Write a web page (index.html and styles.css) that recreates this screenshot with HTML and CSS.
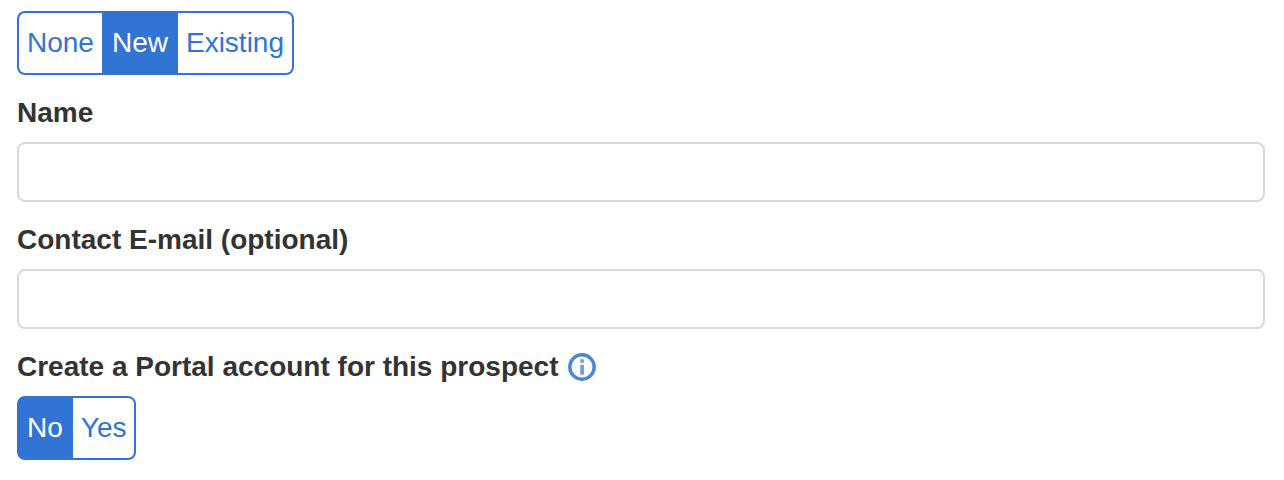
FILE: index.html
```html
<!DOCTYPE html>
<html lang="en">

<head>
  <meta charset="UTF-8" />
  <meta name="viewport" content="width=device-width, initial-scale=1.0" />
  <title>Prospect</title>
  <link rel="stylesheet" href="styles.css">
</head>

<body>
  <form class="prospect-form">
    <div class="btn-group">
      <button type="button" class="btn">None</button>
      <button type="button" class="btn active">New</button>
      <button type="button" class="btn">Existing</button>
    </div>

    <div class="field">
      <label for="name">Name</label>
      <input type="text" id="name" />
    </div>

    <div class="field">
      <label for="email">Contact E-mail (optional)</label>
      <input type="text" id="email" />
    </div>

    <div class="field">
      <div class="label-row">
        <span class="label">Create a Portal account for this prospect</span>
        <svg class="info-icon" viewBox="0 0 28 28">
          <circle class="ring" cx="14" cy="14" r="12.2" />
          <rect class="mark" x="12.2" y="6.2" width="3.8" height="3.6" rx="0.6" />
          <rect class="mark" x="12.2" y="11.8" width="3.8" height="10" rx="0.6" />
        </svg>
      </div>
      <div class="btn-group">
        <button type="button" class="btn active">No</button>
        <button type="button" class="btn">Yes</button>
      </div>
    </div>
  </form>
</body>

</html>
```

FILE: styles.css
```css
:root {
  --primary: #3174d4;
  --text: #333;
  --border: #d9d9d9;
}

* {
  margin: 0;
  padding: 0;
  box-sizing: border-box;
  font-family: "Liberation Sans", Arial, sans-serif;
}

body {
  background: #fff;
  color: var(--text);
}

.prospect-form {
  padding: 11px 19px 0 17px;
}

.btn-group {
  display: flex;
  width: fit-content;
  height: 64px;
}

.btn {
  padding: 0 8px;
  background: #fff;
  border: solid var(--primary);
  border-width: 2px 0;
  color: var(--primary);
  font-size: 28px;
}

.btn:first-child {
  border-left-width: 2px;
  border-radius: 8px 0 0 8px;
}

.btn:last-child {
  border-right-width: 2px;
  border-radius: 0 8px 8px 0;
}

.btn.active {
  background: var(--primary);
  border-width: 2px;
  color: #fff;
}

.field {
  margin-top: 20px;
}

.field label,
.label {
  display: block;
  height: 36px;
  line-height: 36px;
  font-size: 28px;
  font-weight: bold;
}

.field input {
  display: block;
  width: 100%;
  height: 60px;
  margin-top: 11px;
  border: 2px solid var(--border);
  border-radius: 8px;
}

.label-row {
  display: flex;
  align-items: center;
  gap: 10px;
  margin-bottom: 11px;
}

.info-icon {
  width: 28px;
  height: 28px;
}

.ring {
  fill: #fff;
  stroke: #4b85d6;
  stroke-width: 3.4;
}

.mark {
  fill: #6f9fe4;
}
```
